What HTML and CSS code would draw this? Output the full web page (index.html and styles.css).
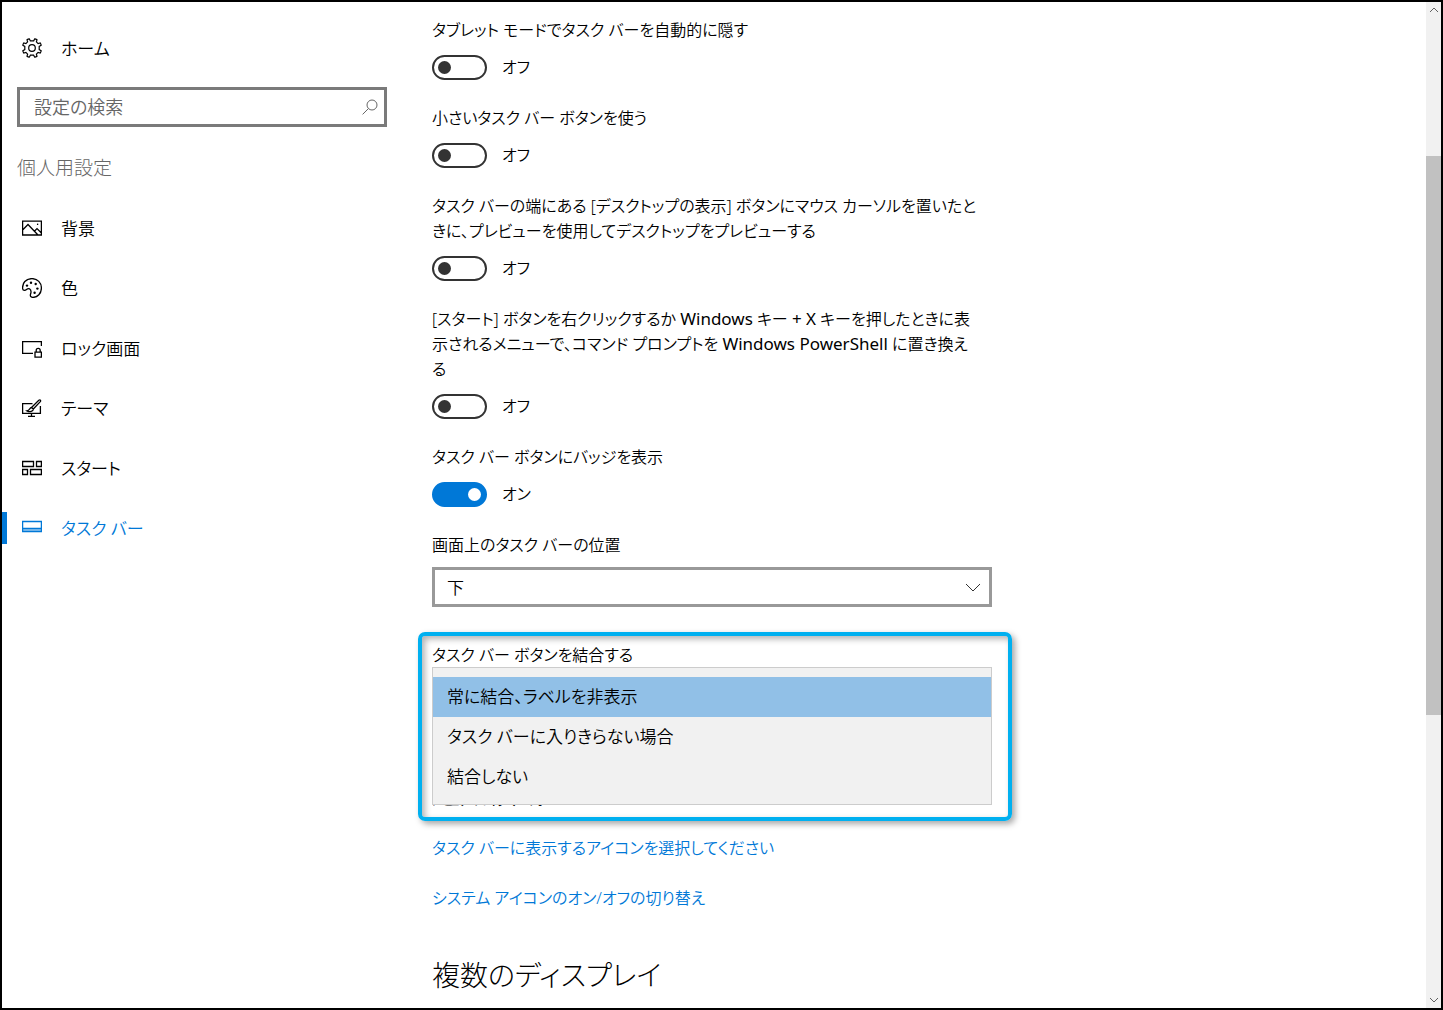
FILE: index.html
```html
<!DOCTYPE html>
<html lang="ja">
<head>
  <meta charset="UTF-8">
  <meta name="viewport" content="width=device-width, initial-scale=1.0">
  <title>設定</title>
  <link rel="stylesheet" href="styles.css">
</head>
<body>

  <div class="window">
    <aside class="sidebar">
      <a class="nav-item" href="#home">
        <svg class="icon gear" viewBox="0 0 20 20">
          <path d="M8.3 2.8 L7.3 .8 Q6 1 5 1.7 L5.6 3.9 L3.9 5.6 L1.7 5 Q1 6 .8 7.3 L2.8 8.4 V11.6 L.8 12.7 Q1 14 1.7 15 L3.9 14.4 L5.6 16.1 L5 18.3 Q6 19 7.3 19.2 L8.4 17.2 H11.6 L12.7 19.2 Q14 19 15 18.3 L14.4 16.1 L16.1 14.4 L18.3 15 Q19 14 19.2 12.7 L17.2 11.6 V8.4 L19.2 7.3 Q19 6 18.3 5 L16.1 5.6 L14.4 3.9 L15 1.7 Q14 1 12.7 .8 L11.7 2.8 Z"/>
          <circle cx="10" cy="10" r="3.3"/>
        </svg>
        <span>ホーム</span>
      </a>

      <div class="search">
        <input type="text" id="search" placeholder="設定の検索" aria-label="設定の検索">
        <svg class="search-icon" viewBox="0 0 16 16">
          <circle cx="10" cy="6" r="5"/>
          <path d="M6.4 9.6 L.6 15.4"/>
        </svg>
      </div>

      <h2 class="group-title">個人用設定</h2>

      <nav>
        <a class="nav-item" href="#background">
          <svg class="icon" viewBox="0 0 20 20">
            <path d="M.6 3.1 H19.4 V17 H.6 Z M.6 12 L6 6.5 L16 17 M12.4 13.2 L15 10.6 L19.4 15"/>
            <path d="M15.6 5.6 V7"/>
          </svg>
          <span>背景</span>
        </a>
        <a class="nav-item" href="#colors">
          <svg class="icon" viewBox="0 0 20 20">
            <path d="M.7 11 C-.1 5 4 .6 10 .6 C15.6 .6 19.4 4.8 19.4 10 C19.4 15.5 15.5 19.4 11 19.4 C8.6 19.4 7.9 17.9 8.6 16 C9.3 14 9.2 12 7.5 10.8 C5 9.5 4.5 12.6 2.5 12.4 C1.4 12.3 .8 11.8 .7 11 Z"/>
            <g class="dots">
              <circle cx="5" cy="7.6" r="1.2"/>
              <circle cx="9" cy="4.8" r="1.2"/>
              <circle cx="13.7" cy="6" r="1.2"/>
              <circle cx="15.4" cy="10.6" r="1.2"/>
              <circle cx="12.6" cy="14.8" r="1.2"/>
            </g>
          </svg>
          <span>色</span>
        </a>
        <a class="nav-item" href="#lockscreen">
          <svg class="icon" viewBox="0 0 20 20">
            <path d="M11 15.4 H.6 V3.6 H19.4 V8"/>
            <path d="M13 14.2 H19.4 V19.2 H13 Z M14.2 14.2 V12.4 A2 2 0 0 1 18.2 12.4 V14.2"/>
          </svg>
          <span>ロック画面</span>
        </a>
        <a class="nav-item" href="#themes">
          <svg class="icon" viewBox="0 0 20 20">
            <path d="M10.5 5.6 H.6 V15.4 H18.4 V8 M9.5 15.4 V18.4 M6 18.4 H13"/>
            <path d="M9.5 9.5 L16.8 2.2 C18.2 1.2 19.3 2.4 18.3 3.7 L11.3 11 Z M9.5 9.5 C7.5 9.8 8 12.2 5 12.8 C8 14.3 11.3 13.5 11.3 11"/>
          </svg>
          <span>テーマ</span>
        </a>
        <a class="nav-item" href="#start">
          <svg class="icon" viewBox="0 0 20 20">
            <path d="M.6 3.5 H11.5 V8.5 H.6 Z M14.5 3.5 H19.4 V8.5 H14.5 Z M.6 11.5 H5.5 V16.5 H.6 Z M8.5 11.5 H19.4 V16.5 H8.5 Z"/>
          </svg>
          <span>スタート</span>
        </a>
        <a class="nav-item active" href="#taskbar">
          <svg class="icon" viewBox="0 0 20 20">
            <path d="M.6 3.5 H19.4 V13.5 H.6 Z M.6 10.5 H19.4"/>
            <path class="shade" d="M1 12 H19"/>
          </svg>
          <span>タスク バー</span>
        </a>
      </nav>
    </aside>

    <main class="content">
      <div class="setting">
        <label for="tablet">タブレット モードでタスク バーを自動的に隠す</label>
        <div class="switch"><input type="checkbox" id="tablet"><span>オフ</span></div>
      </div>
      <div class="setting">
        <label for="small">小さいタスク バー ボタンを使う</label>
        <div class="switch"><input type="checkbox" id="small"><span>オフ</span></div>
      </div>
      <div class="setting">
        <label for="peek">タスク バーの端にある [デスクトップの表示] ボタンにマウス カーソルを置いたと<br>きに、プレビューを使用してデスクトップをプレビューする</label>
        <div class="switch"><input type="checkbox" id="peek"><span>オフ</span></div>
      </div>
      <div class="setting">
        <label for="powershell">[スタート] ボタンを右クリックするか <span class="latin">Windows</span> キー <span class="latin">+ X</span> キーを押したときに表<br>示されるメニューで、コマンド プロンプトを <span class="latin">Windows PowerShell</span> に置き換え<br>る</label>
        <div class="switch"><input type="checkbox" id="powershell"><span>オフ</span></div>
      </div>
      <div class="setting">
        <label for="badge">タスク バー ボタンにバッジを表示</label>
        <div class="switch"><input type="checkbox" id="badge" checked><span>オン</span></div>
      </div>

      <div class="combo">
        <label for="position">画面上のタスク バーの位置</label>
        <div class="combo-box">
          <select id="position">
            <option>下</option>
          </select>
          <svg class="chevron" viewBox="0 0 16 9"><path d="M1 1 L8 8 L15 1"/></svg>
        </div>
      </div>

      <div class="combo highlighted">
        <label for="combine">タスク バー ボタンを結合する</label>
        <div class="combo-box">
          <select id="combine" class="open-list" size="3">
            <option selected>常に結合、ラベルを非表示</option>
            <option>タスク バーに入りきらない場合</option>
            <option>結合しない</option>
          </select>
        </div>
      </div>

      <h1>通知領域</h1>
      <a class="link" href="#icons">タスク バーに表示するアイコンを選択してください</a>
      <a class="link" href="#system-icons">システム アイコンのオン/オフの切り替え</a>

      <h1>複数のディスプレイ</h1>
    </main>

    <div class="scrollbar">
      <button type="button" aria-label="上へ"><svg viewBox="0 0 10 6"><path d="M1 5 L5 1 L9 5"/></svg></button>
      <div class="track"><div class="thumb"></div></div>
      <button type="button" aria-label="下へ"><svg viewBox="0 0 10 6"><path d="M1 1 L5 5 L9 1"/></svg></button>
    </div>
  </div>

</body>
</html>
```
FILE: styles.css
```css
*,
*::before,
*::after {
  box-sizing: border-box;
}

body {
  margin: 0;
  background: #fff;
  color: #000;
  font-family: "Noto Sans", "Noto Sans CJK JP", sans-serif;
  font-size: 16px;
  font-weight: 350;
  line-height: 25px;
  font-feature-settings: "palt";
}

input, select, option, button {
  font: inherit;
  font-feature-settings: inherit;
  color: inherit;
}

a {
  text-decoration: none;
}

svg {
  fill: none;
  stroke: currentColor;
}

.window {
  display: flex;
  height: 100vh;
  border: 2px solid #000;
  overflow: hidden;
}

/* left side */
.sidebar {
  flex: 0 0 400px;
  padding: 16px 15px;
}

.nav-item {
  display: flex;
  align-items: center;
  gap: 19px;
  height: 60px;
  margin: 0 -15px;
  padding-left: 15px;
  border-left: 5px solid transparent;
  color: #000;
  font-size: 17px;
}

.icon {
  width: 20px;
  height: 20px;
  stroke-width: 1.3;
}

.gear {
  stroke-width: 1.2;
}

.dots {
  fill: currentColor;
  stroke: none;
}

.shade {
  stroke-width: 3;
  opacity: 0.4;
}

.nav-item.active {
  color: #0078d7;
  border-image: linear-gradient(transparent 25%, #0078d7 25%, #0078d7 75%, transparent 75%) 1;
  border-width: 0 0 0 5px;
  border-style: solid;
}

.search {
  display: flex;
  align-items: center;
  width: 370px;
  height: 40px;
  margin: 9px 0 26px;
  padding: 0 6px 0 14px;
  border: 3px solid #7a7a7a;
}

.search input {
  flex: 1;
  min-width: 0;
  padding: 0;
  border: none;
  outline: none;
  background: none;
  font-size: 18px;
}

.search input::placeholder {
  color: #666;
  opacity: 1;
}

.search-icon {
  width: 16px;
  height: 16px;
  color: #666;
}

.group-title {
  margin: 0 0 15px;
  color: #666;
  font-size: 19px;
  font-weight: 300;
  line-height: 30px;
}

/* settings */
.content {
  flex: 1;
  min-width: 0;
  padding: 16px 30px;
  overflow: hidden;
}

.setting,
.combo {
  max-width: 560px;
}

.setting {
  margin-bottom: 26px;
}

.setting label,
.combo label {
  display: block;
  white-space: nowrap;
}

.latin {
  font-size: 17px;
  font-weight: 400;
  line-height: 20px;
}

.switch {
  display: flex;
  align-items: center;
  gap: 15px;
  margin-top: 12px;
}

.switch input {
  appearance: none;
  display: flex;
  align-items: center;
  width: 55px;
  height: 25px;
  margin: 0;
  padding: 0 4px;
  border: 2px solid #333;
  border-radius: 13px;
}

.switch input::before {
  content: "";
  width: 13px;
  height: 13px;
  border-radius: 50%;
  background: #333;
}

.switch input:checked {
  justify-content: flex-end;
  border-color: #0078d7;
  background: #0078d7;
}

.switch input:checked::before {
  background: #fff;
}

.combo {
  position: relative;
  margin-bottom: 36px;
}

.combo-box {
  position: relative;
  height: 40px;
  margin-top: 9px;
}

.combo-box select {
  appearance: none;
  width: 100%;
  height: 40px;
  padding: 0 12px;
  border: 3px solid #999;
  border-radius: 0;
  background: #fff;
  font-size: 17px;
}

.chevron {
  position: absolute;
  top: 16px;
  right: 11px;
  width: 16px;
  height: 9px;
  color: #333;
  pointer-events: none;
}

.combo-box .open-list {
  position: absolute;
  top: -10px;
  left: 0;
  height: 138px;
  padding: 9px 0 8px;
  border: 1px solid #ccc;
  background: #f1f1f1;
  outline: none;
  overflow: hidden;
}

.open-list option {
  height: 40px;
  padding: 6px 14px;
  color: #000;
}

.open-list option:checked {
  background: #91c0e7;
}

.highlighted::after {
  content: "";
  position: absolute;
  top: -11px;
  left: -14px;
  right: -20px;
  height: 189px;
  border: 4px solid #00b0f0;
  border-radius: 7px;
  box-shadow: 3px 3px 6px rgba(0, 0, 0, 0.35), inset 3px 3px 6px rgba(0, 0, 0, 0.3);
  pointer-events: none;
}

h1 {
  margin: 44px 0 23px;
  font-size: 28px;
  font-weight: 300;
  line-height: 40px;
}

.highlighted + h1 {
  margin-top: 56px;
}

.link {
  display: block;
  margin-bottom: 25px;
  color: #0078d7;
}

/* scrollbar */
.scrollbar {
  display: flex;
  flex-direction: column;
  flex: 0 0 15px;
  background: #f1f1f1;
}

.scrollbar button {
  display: flex;
  align-items: center;
  justify-content: center;
  height: 16px;
  padding: 0;
  border: none;
  background: none;
  color: #606060;
}

.scrollbar svg {
  width: 10px;
  height: 6px;
}

.track {
  flex: 1;
}

.thumb {
  height: 57.4%;
  margin-top: 138px;
  background: #c1c1c1;
}
```
